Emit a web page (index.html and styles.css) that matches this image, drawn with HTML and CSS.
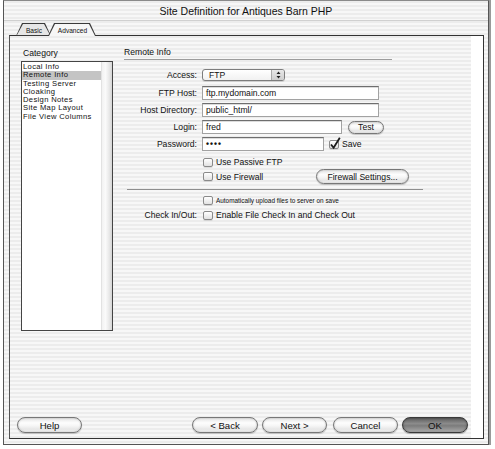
FILE: index.html
```html
<!DOCTYPE html>
<html>
<head>
<meta charset="utf-8">
<link rel="stylesheet" href="styles.css">
</head>
<body>
<div class="window">
  <div class="titlebar">Site Definition for Antiques Barn PHP</div>
  <div class="tabs">
    <span class="tab">Basic</span>
    <span class="tab tab-active">Advanced</span>
  </div>
  <div class="panel">
    <div class="main">
      <div class="sidebar">
        <div class="section-label">Category</div>
        <div class="listbox">
          <ul class="list">
            <li>Local Info</li>
            <li class="selected">Remote Info</li>
            <li>Testing Server</li>
            <li>Cloaking</li>
            <li>Design Notes</li>
            <li>Site Map Layout</li>
            <li>File View Columns</li>
          </ul>
          <div class="scrollbar"></div>
        </div>
      </div>
      <div class="content">
        <div class="content-head">Remote Info</div>

        <div class="row row-access">
          <span class="lbl">Access:</span>
          <div class="select">
            <span class="select-value">FTP</span>
            <span class="select-arrows">
              <svg width="5" height="8" viewBox="0 0 5 8"><path d="M2.5 0.5 L4.5 3 L0.5 3 Z M0.5 5 L4.5 5 L2.5 7.5 Z" fill="#222"/></svg>
            </span>
          </div>
        </div>

        <div class="row row-ftp">
          <span class="lbl">FTP Host:</span>
          <div class="input input-wide">ftp.mydomain.com</div>
        </div>

        <div class="row row-dir">
          <span class="lbl">Host Directory:</span>
          <div class="input input-wide">public_html/</div>
        </div>

        <div class="row row-login">
          <span class="lbl">Login:</span>
          <div class="input input-login">fred</div>
          <span class="btn btn-test">Test</span>
        </div>

        <div class="row row-pass">
          <span class="lbl">Password:</span>
          <div class="input input-pass"><span class="dots">••••</span></div>
          <span class="check check-save">
            <span class="box box-checked">
              <svg class="tick" width="12" height="13" viewBox="0 0 12 13"><path d="M2 7.5 L4.6 10.8 L10.8 0.8" fill="none" stroke="#1a1a1a" stroke-width="1.8"/></svg>
            </span>
            <span class="check-text">Save</span>
          </span>
        </div>

        <div class="row row-passive">
          <span class="lbl"></span>
          <span class="check"><span class="box"></span><span class="check-text">Use Passive FTP</span></span>
        </div>

        <div class="row row-firewall">
          <span class="lbl"></span>
          <span class="check check-fw"><span class="box"></span><span class="check-text">Use Firewall</span></span>
          <span class="btn btn-fw">Firewall Settings...</span>
        </div>

        <div class="sep"></div>

        <div class="row row-auto">
          <span class="lbl"></span>
          <span class="check"><span class="box"></span><span class="check-text small">Automatically upload files to server on save</span></span>
        </div>

        <div class="row row-checkin">
          <span class="lbl">Check In/Out:</span>
          <span class="check"><span class="box"></span><span class="check-text">Enable File Check In and Check Out</span></span>
        </div>
      </div>
    </div>
    <div class="buttons">
      <span class="btn btn-big btn-help">Help</span>
      <span class="btn btn-big btn-back">&lt; Back</span>
      <span class="btn btn-big btn-next">Next &gt;</span>
      <span class="btn btn-big btn-cancel">Cancel</span>
      <span class="btn btn-big btn-ok">OK</span>
    </div>
  </div>
</div>
</body>
</html>
```

FILE: styles.css
```css
* { box-sizing: border-box; }

html, body {
  margin: 0;
  padding: 0;
  background: #ffffff;
}

body {
  width: 495px;
  height: 449px;
  font-family: "Liberation Sans", Arial, sans-serif;
  color: #111;
  overflow: hidden;
}

.window {
  margin-left: 3px;
  width: 486px;
  height: 445px;
  border: 1px solid #555;
  border-top-color: #8a8a8a;
  box-shadow: 2px 0 0 #9a9a9a;
  background: repeating-linear-gradient(to bottom, #ececec 0, #ececec 2px, #f7f7f7 2px, #f7f7f7 4px);
  display: flex;
  flex-direction: column;
}

.titlebar {
  height: 20px;
  line-height: 21px;
  text-align: center;
  font-size: 10.5px;
  color: #111;
  border-bottom: 1px solid #d0d0d0;
}

.tabs {
  height: 15px;
  padding-top: 3px;
  padding-left: 12px;
  display: flex;
  align-items: flex-end;
  position: relative;
  z-index: 2;
  margin-bottom: -1px;
}

.tab {
  position: relative;
  isolation: isolate;
  height: 13px;
  display: inline-flex;
  align-items: center;
  justify-content: center;
  font-size: 6.6px;
  color: #111;
  clip-path: polygon(0 100%, 6px 0, calc(100% - 6px) 0, 100% 100%);
  background: #3a3a3a;
  padding-top: 1px;
}

.tab::before {
  content: "";
  position: absolute;
  left: 1px;
  right: 1px;
  top: 1px;
  bottom: 1px;
  clip-path: polygon(0 100%, 6px 0, calc(100% - 6px) 0, 100% 100%);
  background: #e6e6e6;
  z-index: -1;
}

.tab:first-child {
  width: 35px;
  padding-left: 1px;
}

.tab-active {
  width: 48px;
  margin-left: -3px;
  padding-left: 1px;
}

.tab-active::before {
  bottom: 0;
  background: #f6f6f6;
}

.panel {
  flex: 1;
  margin: 0 4px 5px 5px;
  border: 1px solid #333;
  border-left-color: #555;
  background:
    linear-gradient(to left, #ffffff 0, #ffffff 12px, transparent 12px),
    repeating-linear-gradient(to bottom, #ececec 0, #ececec 2px, #f7f7f7 2px, #f7f7f7 4px);
  display: flex;
  flex-direction: column;
  position: relative;
  z-index: 1;
}

.main {
  flex: 1;
  display: flex;
  padding-top: 11px;
}

.sidebar {
  margin-left: 11px;
  width: 92px;
}

.section-label {
  height: 13px;
  font-size: 8.6px;
  line-height: 12px;
  padding-left: 2px;
}

.listbox {
  margin-top: 1px;
  height: 270px;
  border: 1px solid #444;
  background: #fff;
  display: flex;
}

.list {
  list-style: none;
  margin: 0;
  padding: 1px 0 0 0;
  flex: 1;
}

.list li {
  height: 8.3px;
  line-height: 8.3px;
  font-size: 7.6px;
  letter-spacing: 0.35px;
  padding-left: 1px;
  white-space: nowrap;
}

.list li.selected {
  background: #c4c4c4;
}

.scrollbar {
  width: 11px;
  border-left: 1px solid #e2e2e2;
  background: linear-gradient(to right, #f2f2f2 0, #fafafa 35%, #e9e9e9 70%, #d6d6d6 100%);
}

.content {
  margin-left: 11px;
  display: flex;
  flex-direction: column;
}

.content-head {
  width: 268px;
  height: 13px;
  font-size: 8.6px;
  line-height: 11px;
  border-bottom: 1px solid #9c9c9c;
}

.row {
  display: flex;
  align-items: center;
  font-size: 8.6px;
}

.lbl {
  width: 73px;
  margin-right: 5px;
  text-align: right;
  white-space: nowrap;
}

.row-access { margin-top: 9px; height: 12px; }
.row-ftp { margin-top: 5px; height: 14px; }
.row-dir { margin-top: 3px; height: 14px; }
.row-login { margin-top: 3px; height: 14px; }
.row-pass { margin-top: 3px; height: 14px; }
.row-passive { margin-top: 6px; height: 10px; }
.row-firewall { margin-top: 2px; height: 15px; }
.row-auto { margin-top: 6px; height: 9px; }
.row-checkin { margin-top: 5px; height: 10px; }

.sep {
  margin-top: 5px;
  margin-left: 3px;
  width: 296px;
  height: 1px;
  background: #8e8e8e;
}

.select {
  width: 83px;
  height: 12px;
  border: 1px solid #7d7d7d;
  border-radius: 3px;
  background: linear-gradient(to bottom, #ffffff, #f1f1f1);
  display: flex;
  align-items: center;
  box-shadow: 0 1px 0 rgba(0,0,0,0.12);
}

.select-value {
  flex: 1;
  padding-left: 6px;
  line-height: 10px;
}

.select-arrows {
  width: 13px;
  height: 100%;
  border-left: 1px solid #aaa;
  background: linear-gradient(to bottom, #e8e8e8, #cfcfcf);
  border-radius: 0 2px 2px 0;
  display: flex;
  align-items: center;
  justify-content: center;
}

.input {
  height: 14px;
  border: 1px solid #a2a2a2;
  border-top-color: #6e6e6e;
  background: #fff;
  box-shadow: inset 0 1px 0 #dcdcdc;
  padding: 0 3px;
  line-height: 12px;
  white-space: nowrap;
  overflow: hidden;
}

.input-wide { width: 177px; }
.input-login { width: 140px; }
.input-pass { width: 122px; }

.dots {
  font-size: 8.6px;
  letter-spacing: 1px;
  font-weight: bold;
}

.check {
  display: inline-flex;
  align-items: center;
  margin-left: 1px;
  white-space: nowrap;
}

.box {
  position: relative;
  width: 10px;
  height: 9px;
  border: 1px solid #8a8a8a;
  border-radius: 2px;
  background: linear-gradient(to bottom, #ffffff, #e2e2e2);
  box-shadow: 0 1px 0 rgba(0,0,0,0.1);
  flex: none;
}

.tick {
  position: absolute;
  left: -1px;
  top: -4px;
}

.check-text {
  margin-left: 3px;
}

.check-text.small {
  font-size: 6.4px;
}

.check-save {
  margin-left: 5px;
}

.check-fw {
  width: 113px;
}

.btn {
  display: inline-flex;
  align-items: center;
  justify-content: center;
  border: 1px solid #777;
  border-radius: 8px;
  background: linear-gradient(to bottom, #e4e4e4 0, #fdfdfd 35%, #f6f6f6 55%, #e6e6e6 80%, #f4f4f4 100%);
  box-shadow: inset 0 0 2px rgba(0,0,0,0.25), 0 1px 1px rgba(0,0,0,0.2);
  color: #111;
  white-space: nowrap;
}

.btn-test {
  margin-left: 6px;
  width: 36px;
  height: 13px;
  font-size: 8.6px;
}

.btn-fw {
  width: 93px;
  height: 15px;
  font-size: 8.6px;
}

.buttons {
  height: 16px;
  margin-bottom: 5px;
  display: flex;
}

.btn-big {
  height: 16px;
  font-size: 9.6px;
  width: 65px;
}

.btn-help { margin-left: 7px; }
.btn-back { margin-left: auto; width: 66px; }
.btn-next { margin-left: 4px; }
.btn-cancel { margin-left: 6px; }
.btn-ok {
  margin-left: 4px;
  margin-right: 15px;
  width: 66px;
  border-color: #3a3a3a;
  background: linear-gradient(to bottom, #5c5c5c 0, #8c8c8c 40%, #7c7c7c 55%, #9a9a9a 85%, #b4b4b4 100%);
  box-shadow: inset 0 0 2px rgba(0,0,0,0.4), 0 1px 1px rgba(0,0,0,0.3);
  color: #111;
}
```
